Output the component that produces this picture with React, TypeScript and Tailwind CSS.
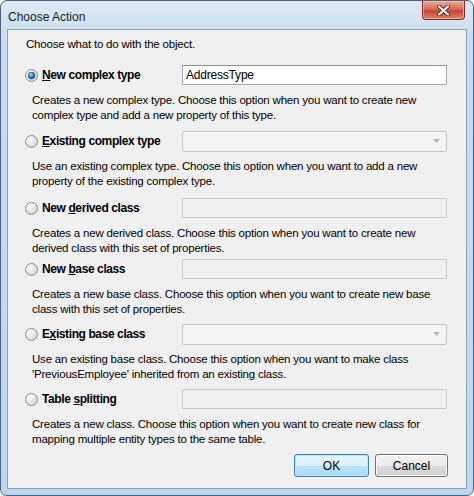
import React from 'react';

const font = { fontFamily: '"Liberation Sans", Arial, sans-serif' };

const Radio = ({ checked }: { checked?: boolean }) => (
  <svg width="13" height="13" viewBox="0 0 13 13" className="shrink-0">
    <defs>
      <radialGradient id="rg-off" cx="0.35" cy="0.3" r="0.8">
        <stop offset="0" stopColor="#ffffff" />
        <stop offset="1" stopColor="#cfcfcf" />
      </radialGradient>
      <radialGradient id="rg-on" cx="0.4" cy="0.35" r="0.7">
        <stop offset="0" stopColor="#b9e0ff" />
        <stop offset="0.5" stopColor="#2f8ad6" />
        <stop offset="1" stopColor="#0d3d72" />
      </radialGradient>
    </defs>
    <circle cx="6.5" cy="6.5" r="6" fill="url(#rg-off)" stroke="#8e8f8f" strokeWidth="1" />
    {checked && <circle cx="6.5" cy="6.5" r="3.4" fill="url(#rg-on)" stroke="#1d5180" strokeWidth="0.6" />}
  </svg>
);

const Field = ({ kind, value }: { kind: 'text' | 'combo' | 'off'; value?: string }) => {
  if (kind === 'text') {
    return (
      <div className="w-[265px] h-[20px] bg-white border border-[#abadb3] border-t-[#8e9197] flex items-center px-[3px] text-[12px] tracking-[-0.2px] text-black">
        {value}
      </div>
    );
  }
  if (kind === 'combo') {
    return (
      <div className="w-[265px] h-[21px] bg-[#f4f4f4] border border-[#c5c5c5] rounded-[2px] flex items-center justify-end pr-[6px]">
        <svg width="7" height="4" viewBox="0 0 7 4">
          <path d="M0 0 H7 L3.5 4 Z" fill="#b4b4b4" />
        </svg>
      </div>
    );
  }
  return <div className="w-[265px] h-[20px] bg-[#f0f0f0] border border-[#c9c9c9] rounded-[1px]" />;
};

const Section = ({
  label,
  kind,
  value,
  checked,
  lines,
  mt,
}: {
  label: React.ReactNode;
  kind: 'text' | 'combo' | 'off';
  value?: string;
  checked?: boolean;
  lines: string[];
  mt: string;
}) => (
  <div className={mt}>
    <div className="flex items-center h-[20px] pl-[17px]">
      <Radio checked={checked} />
      <div className="w-[140px] ml-[4px] font-bold text-[12px] text-black tracking-[-0.4px] whitespace-nowrap">{label}</div>
      <Field kind={kind} value={value} />
    </div>
    <div className="mt-[8px] pl-[24px] text-[11.5px] tracking-[-0.2px] leading-[15px] text-black">
      {lines.map((l) => (
        <div key={l} className="whitespace-nowrap">{l}</div>
      ))}
    </div>
  </div>
);

export default function App() {
  return (
    <div style={font} className="w-[474px] h-[496px] bg-white">
      <div className="w-[474px] h-[496px] rounded-[7px] border border-[#4d6178] bg-[linear-gradient(to_bottom,#dde9f6,#c9dcf0_40px,#bfd5ed)] flex flex-col overflow-hidden">
        {/* title bar */}
        <div className="h-[28px] flex items-start justify-between shrink-0">
          <div className="pl-[7px] pt-[7px] text-[12px] text-[#1a1a1a]">Choose Action</div>
          <div className="mr-[8px] w-[43px] h-[19px] rounded-b-[4px] border border-t-0 border-[#7a2a22] bg-[linear-gradient(to_bottom,#e9a898,#d86c56_45%,#c7432f_55%,#dc866d)] flex items-center justify-center shadow-[inset_0_0_0_1px_rgba(255,220,210,0.5)]">
            <svg width="13" height="11" viewBox="0 0 13 11">
              <path d="M2 1.5 L11 9.5 M11 1.5 L2 9.5" stroke="#5a2a24" strokeWidth="4" strokeLinecap="round" />
              <path d="M2 1.5 L11 9.5 M11 1.5 L2 9.5" stroke="#ffffff" strokeWidth="2.2" strokeLinecap="round" />
            </svg>
          </div>
        </div>

        {/* client area */}
        <div className="mx-[6px] w-[460px] h-[460px] bg-[#f0f0f0] border border-[#8fa3ba] flex flex-col">
          <div className="pt-[7px] pl-[18px] text-[11.5px] tracking-[-0.2px] leading-[15px] text-black">Choose what to do with the object.</div>

          <Section
            mt="mt-[13px]"
            checked
            kind="text"
            value="AddressType"
            label={<><span className="underline">N</span>ew complex type</>}
            lines={[
              'Creates a new complex type. Choose this option when you want to create new',
              'complex type and add a new property of this type.',
            ]}
          />
          <Section
            mt="mt-[8px]"
            kind="combo"
            label={<><span className="underline">E</span>xisting complex type</>}
            lines={[
              'Use an existing complex type. Choose this option when you want to add a new',
              'property of the existing complex type.',
            ]}
          />
          <Section
            mt="mt-[9px]"
            kind="off"
            label={<>New <span className="underline">d</span>erived class</>}
            lines={[
              'Creates a new derived class. Choose this option when you want to create new',
              'derived class with this set of properties.',
            ]}
          />
          <Section
            mt="mt-[3px]"
            kind="off"
            label={<>New <span className="underline">b</span>ase class</>}
            lines={[
              'Creates a new base class. Choose this option when you want to create new base',
              'class with this set of properties.',
            ]}
          />
          <Section
            mt="mt-[7px]"
            kind="combo"
            label={<>E<span className="underline">x</span>isting base class</>}
            lines={[
              'Use an existing base class. Choose this option when you want to make class',
              "'PreviousEmployee' inherited from an existing class.",
            ]}
          />
          <Section
            mt="mt-[7px]"
            kind="off"
            label={<>Table <span className="underline">s</span>plitting</>}
            lines={[
              'Creates a new class. Choose this option when you want to create new class for',
              'mapping multiple entity types to the same table.',
            ]}
          />

          <div className="mt-[7px] flex justify-end gap-[6px] pr-[18px]">
            <button className="w-[75px] h-[23px] rounded-[3px] border border-[#3c7fb1] bg-[linear-gradient(to_bottom,#eaf6fd,#d9f0fc_50%,#bee6fd_50%,#a7d9f5)] shadow-[inset_0_0_0_1px_#bde7fb] text-[12px] text-black">
              OK
            </button>
            <button className="w-[73px] h-[23px] rounded-[3px] border border-[#707070] bg-[linear-gradient(to_bottom,#f2f2f2,#ebebeb_50%,#dddddd_50%,#cfcfcf)] shadow-[inset_0_0_0_1px_#fcfcfc] text-[12px] text-black">
              Cancel
            </button>
          </div>
        </div>
      </div>
    </div>
  );
}
